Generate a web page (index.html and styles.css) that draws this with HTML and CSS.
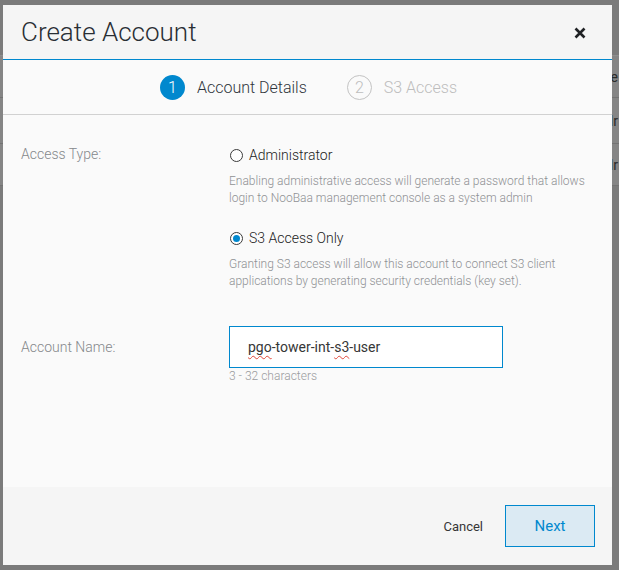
FILE: index.html
```html
<!DOCTYPE html>
<html>
<head>
<meta charset="utf-8">
<link rel="stylesheet" href="styles.css">
</head>
<body>
<div class="page">
  <div class="page-row page-row-top"></div>
  <div class="page-row page-row-a"><span class="frag">Acce</span></div>
  <div class="page-row page-row-b"><span class="frag">Adr</span></div>
  <div class="page-row page-row-c"><span class="frag">Adr</span></div>
</div>
<div class="modal">
  <div class="modal-header">
    <h1 class="modal-title">Create Account</h1>
    <svg class="close" width="12" height="12" viewBox="0 0 12 12"><path d="M1.5 1.5 L10.5 10.5 M10.5 1.5 L1.5 10.5" stroke="#1f2124" stroke-width="2.6" stroke-linecap="butt"/></svg>
  </div>
  <div class="steps">
    <div class="step step-active"><span class="step-num">1</span><span class="step-label">Account Details</span></div>
    <div class="step step-inactive"><span class="step-num">2</span><span class="step-label">S3 Access</span></div>
  </div>
  <div class="modal-body">
    <div class="form-row">
      <div class="form-label">Access Type:</div>
      <div class="form-field">
        <div class="radio-row"><span class="radio"></span><span class="radio-label">Administrator</span></div>
        <p class="desc">Enabling administrative access will generate a password that allows login to NooBaa management console as a system admin</p>
        <div class="radio-row radio-row-second"><span class="radio radio-checked"></span><span class="radio-label">S3 Access Only</span></div>
        <p class="desc">Granting S3 access will allow this account to connect S3 client applications by generating security credentials (key set).</p>
      </div>
    </div>
    <div class="form-row form-row-name">
      <div class="form-label form-label-input">Account Name:</div>
      <div class="form-field">
        <div class="text-input"><span class="typo">pgo</span>-tower-int-<span class="typo">s3</span>-user</div>
        <div class="help">3 - 32 characters</div>
      </div>
    </div>
  </div>
  <div class="modal-footer">
    <button class="btn btn-link">Cancel</button>
    <button class="btn btn-next">Next</button>
  </div>
</div>
</body>
</html>
```
FILE: styles.css
```css
* { box-sizing: border-box; }
html, body { margin: 0; padding: 0; }
body {
  width: 619px;
  height: 570px;
  overflow: hidden;
  background: #7b7b7b;
  font-family: Roboto, "Liberation Sans", sans-serif;
  position: relative;
}
.page {
  display: flex;
  flex-direction: column;
}
.page-row {
  border-bottom: 1px solid #737373;
  background: #858585;
  display: flex;
  align-items: center;
  justify-content: flex-end;
  font-size: 14px;
  color: #2a2a2a;
  padding-right: 1px;
}
.page-row-top { height: 56px; background: #7b7b7b; border-bottom-color: #8e8e8e; }
.page-row-a { height: 42px; }
.page-row-b { height: 46px; }
.page-row-c { height: 42px; }
.frag { line-height: 1; }

.modal {
  position: absolute;
  left: 3px;
  top: 5px;
  width: 609px;
  height: 560px;
  background: #fafafa;
  display: flex;
  flex-direction: column;
}
.modal-header {
  height: 55px;
  background: #f5f5f5;
  border-bottom: 1px solid #0088ce;
  display: flex;
  align-items: center;
  justify-content: space-between;
  padding: 0 26px 0 18px;
  flex: none;
}
.modal-title {
  margin: 0;
  font-size: 26px;
  font-weight: 300;
  color: #292e34;
  position: relative;
  top: 0px;
}
.close { display: block; position: relative; top: 1px; }

.steps {
  height: 55px;
  border-bottom: 1px solid #d1d1d1;
  display: flex;
  align-items: center;
  justify-content: center;
  gap: 40px;
  padding-left: 2px;
  flex: none;
}
.step { display: flex; align-items: center; gap: 12px; }
.step-num {
  width: 25px;
  height: 25px;
  border-radius: 50%;
  display: flex;
  align-items: center;
  justify-content: center;
  font-size: 16px;
  font-weight: 300;
}
.step-label { font-size: 16px; font-weight: 300; }
.step-active .step-num { background: #0088ce; color: #fff; }
.step-active .step-label { color: #2f353b; }
.step-inactive .step-num { border: 1px solid #c3c3c3; color: #bdbdbd; }
.step-inactive .step-label { color: #bdbdbd; }

.modal-body {
  flex: 1;
  padding: 30px 18px 0 18px;
}
.form-row { display: grid; grid-template-columns: 208px 1fr; }
.form-label {
  font-size: 14px;
  font-weight: 300;
  color: #85888b;
  line-height: 18px;
}
.radio-row {
  display: flex;
  align-items: center;
  height: 20px;
  gap: 6px;
  padding-left: 1px;
}
.radio-row-second { margin-top: 21px; }
.radio {
  width: 13px;
  height: 13px;
  border-radius: 50%;
  border: 1px solid #3a3a3a;
  background: #fff;
  position: relative;
  flex: none;
}
.radio-checked::after {
  content: "";
  position: absolute;
  left: 2px;
  top: 2px;
  width: 7px;
  height: 7px;
  border-radius: 50%;
  background: #0088ce;
}
.radio-label {
  font-size: 14px;
  font-weight: 300;
  color: #222;
}
.desc {
  margin: 8px 0 0 0;
  font-size: 12px;
  font-weight: 300;
  line-height: 17px;
  color: #8f9194;
  width: 365px;
}
.form-row-name { margin-top: 36px; }
.form-label-input { line-height: 42px; }
.text-input {
  width: 274px;
  height: 42px;
  border: 1px solid #0088ce;
  background: #fff;
  font-size: 14px;
  color: #363636;
  display: flex;
  align-items: center;
  padding-left: 18px;
}
.typo {
  text-decoration: underline wavy #e0483a;
  text-decoration-thickness: 1px;
  text-underline-offset: 3px;
}
.help {
  font-size: 12px;
  font-weight: 300;
  color: #9a9c9e;
  line-height: 16px;
}

.modal-footer {
  height: 78px;
  background: #f5f5f5;
  display: flex;
  align-items: center;
  justify-content: flex-end;
  padding-right: 17px;
  gap: 22px;
  flex: none;
}
.btn {
  font-family: Roboto, "Liberation Sans", sans-serif;
  cursor: pointer;
}
.btn-link {
  background: none;
  border: none;
  font-size: 13px;
  color: #363636;
  padding: 0;
  margin-top: 1px;
}
.btn-next {
  width: 90px;
  height: 42px;
  background: #dbeaf3;
  border: 1px solid #0088ce;
  color: #0088ce;
  font-size: 15px;
}
```
